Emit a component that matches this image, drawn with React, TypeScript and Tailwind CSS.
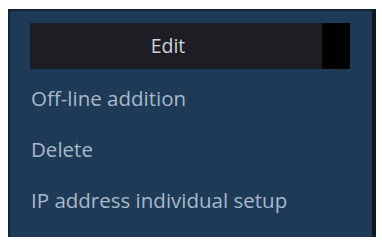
const items = ['Off-line addition', 'Delete', 'IP address individual setup']

export default function App() {
  return (
    <div className="w-[382px] h-[242px] bg-white pt-[9px] pl-[8px]">
      <div
        className="w-[368px] h-[228px] bg-[#1d3a56] border-t-2 border-l-2 border-[#132536] border-r-4 border-r-[#0d1824] pt-[12px] pl-[20px] pr-[22px]"
        style={{ fontFamily: '"Open Sans", sans-serif' }}
      >
        <div className="flex h-[46px]">
          <div className="flex-1 bg-[#1c1e24] flex items-center justify-center pr-[16px] text-[19.5px] text-[#cfd2d6]">
            Edit
          </div>
          <div className="w-[28px] bg-black" />
        </div>
        <ul className="flex flex-col pt-[4px]">
          {items.map((label) => (
            <li key={label} className="h-[51px] flex items-center pl-[1px] text-[20.5px] text-[#a8b9ca]">
              {label}
            </li>
          ))}
        </ul>
      </div>
    </div>
  )
}
